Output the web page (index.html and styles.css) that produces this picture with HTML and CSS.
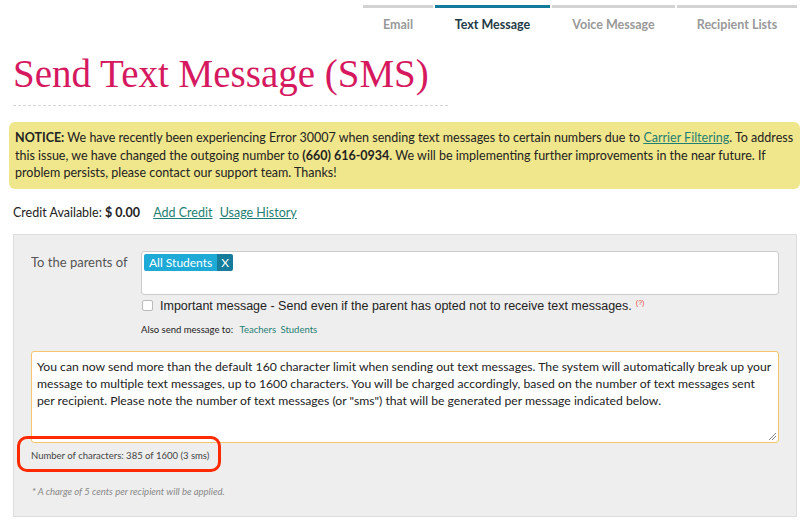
FILE: index.html
```html
<!DOCTYPE html>
<html lang="en">
<head>
    <meta charset="UTF-8">
    <meta name="viewport" content="width=device-width, initial-scale=1.0">
    <title>Send Text Message (SMS)</title>
    <link rel="stylesheet" href="styles.css">
</head>
<body>
    <div class="page">
        <nav class="tabs">
            <a class="tab tab-email">Email</a>
            <a class="tab tab-text active">Text Message</a>
            <a class="tab tab-voice">Voice Message</a>
            <a class="tab tab-lists">Recipient Lists</a>
        </nav>

        <h1 class="page-title">Send Text Message (SMS)</h1>

        <div class="notice">
            <b>NOTICE:</b> We have recently been experiencing Error 30007 when sending text messages to certain numbers due to <a href="#">Carrier Filtering</a>. To address this issue, we have changed the outgoing number to <b>(660) 616-0934</b>. We will be implementing further improvements in the near future. If problem persists, please contact our support team. Thanks!
        </div>

        <div class="credit">
            Credit Available: <b>$ 0.00</b>
            <a href="#" class="credit-link first">Add Credit</a>
            <a href="#" class="credit-link">Usage History</a>
        </div>

        <div class="panel">
            <div class="row">
                <label class="row-label">To the parents of</label>
                <div class="row-field">
                    <div class="recipients">
                        <span class="chip"><span class="chip-name">All Students</span><span class="chip-x">X</span></span>
                    </div>
                    <div class="important">
                        <span class="checkbox"></span>
                        <span>Important message - Send even if the parent has opted not to receive text messages.</span>
                        <sup class="help">(?)</sup>
                    </div>
                    <div class="also">
                        Also send message to:
                        <a href="#" class="also-link">Teachers</a>
                        <a href="#" class="also-link">Students</a>
                    </div>
                </div>
            </div>

            <div class="message-wrap">
                <div class="message">You can now send more than the default 160 character limit when sending out text messages. The system will automatically break up your message to multiple text messages, up to 1600 characters. You will be charged accordingly, based on the number of text messages sent per recipient. Please note the number of text messages (or "sms") that will be generated per message indicated below.
                    <svg class="grip" width="8" height="8" viewBox="0 0 8 8"><path d="M1 8 L8 1 M4 8 L8 4" stroke="#888" stroke-width="1"/></svg>
                </div>
            </div>

            <div class="count">
                Number of characters: 385 of 1600 (3 sms)
                <span class="highlight"></span>
            </div>

            <p class="charge">* A charge of 5 cents per recipient will be applied.</p>
        </div>
    </div>
</body>
</html>
```

FILE: styles.css
```css
body {
    margin: 0;
    background: #fff;
    color: #222;
    font-family: Lato, "Open Sans", Arial, sans-serif;
    font-size: 13px;
}
a {
    color: #1f7f73;
}
.page {
    padding: 0 13px;
}
.tabs {
    display: flex;
    justify-content: flex-end;
    gap: 2px;
    padding-top: 5px;
    margin-right: -1px;
}
.tab {
    display: block;
    border-top: 3px solid #d3d3d3;
    padding-top: 9px;
    height: 23px;
    text-align: center;
    font-weight: bold;
    font-size: 12.5px;
    color: #999;
}
.tab.active {
    border-top-color: #127b9b;
    color: #1f3a46;
}
.tab-email { width: 70px; }
.tab-text { width: 115px; }
.tab-voice { width: 123px; }
.tab-lists { width: 120px; }

.page-title {
    margin: 12px 0 0;
    width: 435px;
    padding-bottom: 9px;
    border-bottom: 1px dashed #d6d6d6;
    font-family: "Liberation Serif", "DejaVu Serif", serif;
    font-weight: normal;
    font-size: 39px;
    line-height: 44px;
    color: #d6195f;
}

.notice {
    margin: 16px -4px 0;
    padding: 7px 6px 7px;
    background: #f0e68c;
    border-radius: 6px;
    line-height: 17.5px;
    font-size: 12.5px;
}
.notice b {
    font-weight: bold;
}

.credit {
    margin-top: 16px;
    font-size: 12.5px;
}
.credit-link {
    margin-left: 4px;
}
.credit-link.first {
    margin-left: 10px;
}

.panel {
    margin: 14px -1px 0 0;
    background: #eee;
    border: 1px solid #ddd;
    padding: 16px 17px 19px;
}
.row {
    display: flex;
}
.row-label {
    width: 110px;
    padding-top: 3px;
    color: #555;
}
.row-field {
    flex: 1;
}
.recipients {
    height: 38px;
    background: #fff;
    border: 1px solid #ccc;
    border-radius: 3px;
    padding: 2px;
}
.chip {
    display: inline-flex;
    height: 17px;
    line-height: 17px;
    border-radius: 2px;
    overflow: hidden;
    color: #fff;
    font-size: 12px;
}
.chip-name {
    background: #1daad7;
    padding: 0 5px;
}
.chip-x {
    background: #157c9c;
    padding: 0 4px;
}
.important {
    display: flex;
    align-items: center;
    margin-top: 4px;
    font-family: "Liberation Sans", Arial, sans-serif;
    font-size: 12.5px;
    color: #222;
}
.checkbox {
    width: 9px;
    height: 9px;
    margin: 0 7px 0 1px;
    border: 1px solid #bbb;
    border-radius: 2px;
    background: #fff;
}
.help {
    margin-left: 4px;
    color: #e8413b;
    font-size: 7px;
    align-self: flex-start;
}
.also {
    margin-top: 11px;
    font-size: 9.5px;
    color: #222;
}
.also-link {
    margin-left: 4px;
    text-decoration: none;
}
.also-link + .also-link {
    margin-left: 2px;
}

.message-wrap {
    margin-top: 16px;
}
.message {
    position: relative;
    height: 77px;
    padding: 6px 5px 7px;
    background: #fff;
    border: 1px solid #f7c46c;
    border-radius: 3px;
    line-height: 17px;
    font-size: 12.2px;
}
.grip {
    position: absolute;
    right: 2px;
    bottom: 2px;
}

.count {
    position: relative;
    margin-top: 7px;
    font-size: 9.5px;
    color: #444;
}
.highlight {
    position: absolute;
    left: -14px;
    top: -14px;
    width: 198px;
    height: 30px;
    border: 3px solid #ff2a00;
    border-radius: 10px;
}
.charge {
    margin: 25px 0 0 1px;
    font-size: 9.5px;
    font-style: italic;
    color: #888;
}
```
